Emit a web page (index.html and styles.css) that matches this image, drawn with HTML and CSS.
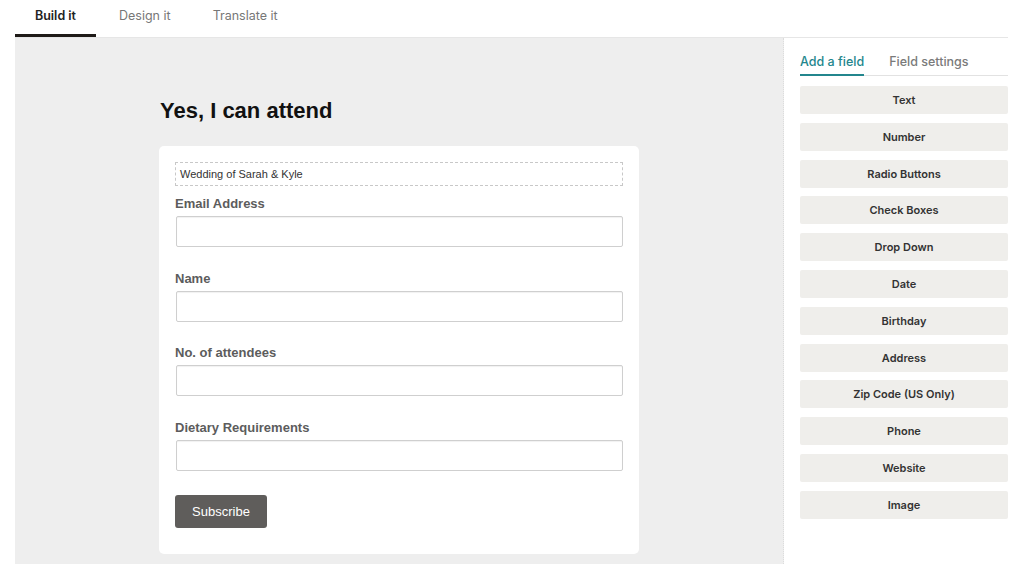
FILE: index.html
```html
<!DOCTYPE html>
<html lang="en">
<head>
    <meta charset="UTF-8">
    <meta name="viewport" content="width=device-width, initial-scale=1.0">
    <title>Form builder</title>
    <link rel="stylesheet" href="styles.css">
</head>
<body>
    <div class="topo">
        <a class="aba ativa">Build it</a>
        <a class="aba">Design it</a>
        <a class="aba">Translate it</a>
    </div>
    <div class="principal">
        <div class="tela">
            <h1 class="titulo">Yes, I can attend</h1>
            <div class="cartao">
                <div class="descricao">Wedding of Sarah &amp; Kyle</div>
                <div class="campo">
                    <label>Email Address</label>
                    <input type="text">
                </div>
                <div class="campo">
                    <label>Name</label>
                    <input type="text">
                </div>
                <div class="campo">
                    <label>No. of attendees</label>
                    <input type="text">
                </div>
                <div class="campo">
                    <label>Dietary Requirements</label>
                    <input type="text">
                </div>
                <button class="botaoEnviar">Subscribe</button>
            </div>
        </div>
        <div class="painel">
            <div class="painelAbas">
                <span class="painelAba ativa">Add a field</span>
                <span class="painelAba">Field settings</span>
            </div>
            <div class="listaCampos">
                <button class="itemCampo">Text</button>
                <button class="itemCampo">Number</button>
                <button class="itemCampo">Radio Buttons</button>
                <button class="itemCampo">Check Boxes</button>
                <button class="itemCampo">Drop Down</button>
                <button class="itemCampo">Date</button>
                <button class="itemCampo">Birthday</button>
                <button class="itemCampo">Address</button>
                <button class="itemCampo">Zip Code (US Only)</button>
                <button class="itemCampo">Phone</button>
                <button class="itemCampo">Website</button>
                <button class="itemCampo">Image</button>
            </div>
        </div>
    </div>
</body>
</html>
```

FILE: styles.css
```css
* {
    box-sizing: border-box;
}
body {
    margin: 0;
    font-family: "Inter", "Liberation Sans", sans-serif;
    background: white;
    height: 564px;
    overflow: hidden;
}
.topo {
    display: flex;
    margin: 0 16px 0 15px;
    height: 38px;
    border-bottom: 1px solid #e6e6e6;
}
.aba {
    display: flex;
    align-items: center;
    justify-content: center;
    height: 37px;
    padding: 0 22px 3px 20px;
    font-size: 12.5px;
    color: #777;
    border-bottom: 3px solid transparent;
    margin-bottom: -1px;
}
.aba.ativa {
    width: 81px;
    padding: 0 0 3px 0;
    color: #222;
    font-weight: 600;
    border-bottom-color: #1e1a17;
    margin-right: 3px;
}
.principal {
    display: flex;
    height: 526px;
}
.tela {
    width: 769px;
    margin-left: 15px;
    background: #eeeeee;
    border-right: 1px dotted #dcdcdc;
    padding: 60px 0 0 144px;
}
.titulo {
    margin: 0 0 22px 1px;
    font-family: "Liberation Sans", Arial, sans-serif;
    font-size: 22px;
    line-height: 26px;
    color: #111;
}
.cartao {
    width: 480px;
    background: white;
    border-radius: 5px;
    padding: 16px 16px 26px 16px;
    font-family: "Liberation Sans", Arial, sans-serif;
}
.descricao {
    height: 24px;
    border: 1px dashed #c8c8c8;
    padding: 0 4px;
    font-size: 11px;
    line-height: 22px;
    color: #333;
    margin-bottom: 10px;
}
.campo {
    display: flex;
    flex-direction: column;
    margin-bottom: 23.5px;
}
.campo label {
    font-size: 13px;
    line-height: 16px;
    font-weight: bold;
    color: #5c5c5c;
    margin-bottom: 4px;
}
.campo input {
    height: 31px;
    margin-left: 1px;
    border: 1px solid #cfcfcf;
    border-radius: 2px;
    box-shadow: inset 0 1px 1px rgba(0, 0, 0, 0.06);
}
.botaoEnviar {
    margin-top: 1px;
    width: 92px;
    height: 33px;
    background: #5f5d5b;
    color: white;
    border: none;
    border-radius: 3px;
    font-family: "Liberation Sans", Arial, sans-serif;
    font-size: 13px;
}
.painel {
    flex: 1;
    padding: 16px 16px 0 16px;
}
.painelAbas {
    display: flex;
    gap: 25px;
    border-bottom: 1px solid #e2e2e2;
    height: 22px;
}
.painelAba {
    font-size: 12.5px;
    color: #7a7a7a;
    font-weight: 500;
}
.painelAba.ativa {
    color: #23868d;
    border-bottom: 2px solid #23868d;
    height: 22px;
    margin-bottom: -1px;
}
.listaCampos {
    display: flex;
    flex-direction: column;
    gap: 8.8px;
    margin-top: 10px;
}
.itemCampo {
    height: 28px;
    background: #efeeeb;
    border: none;
    border-radius: 2px;
    font-family: "Inter", sans-serif;
    font-size: 11px;
    font-weight: 600;
    color: #333;
}
```
